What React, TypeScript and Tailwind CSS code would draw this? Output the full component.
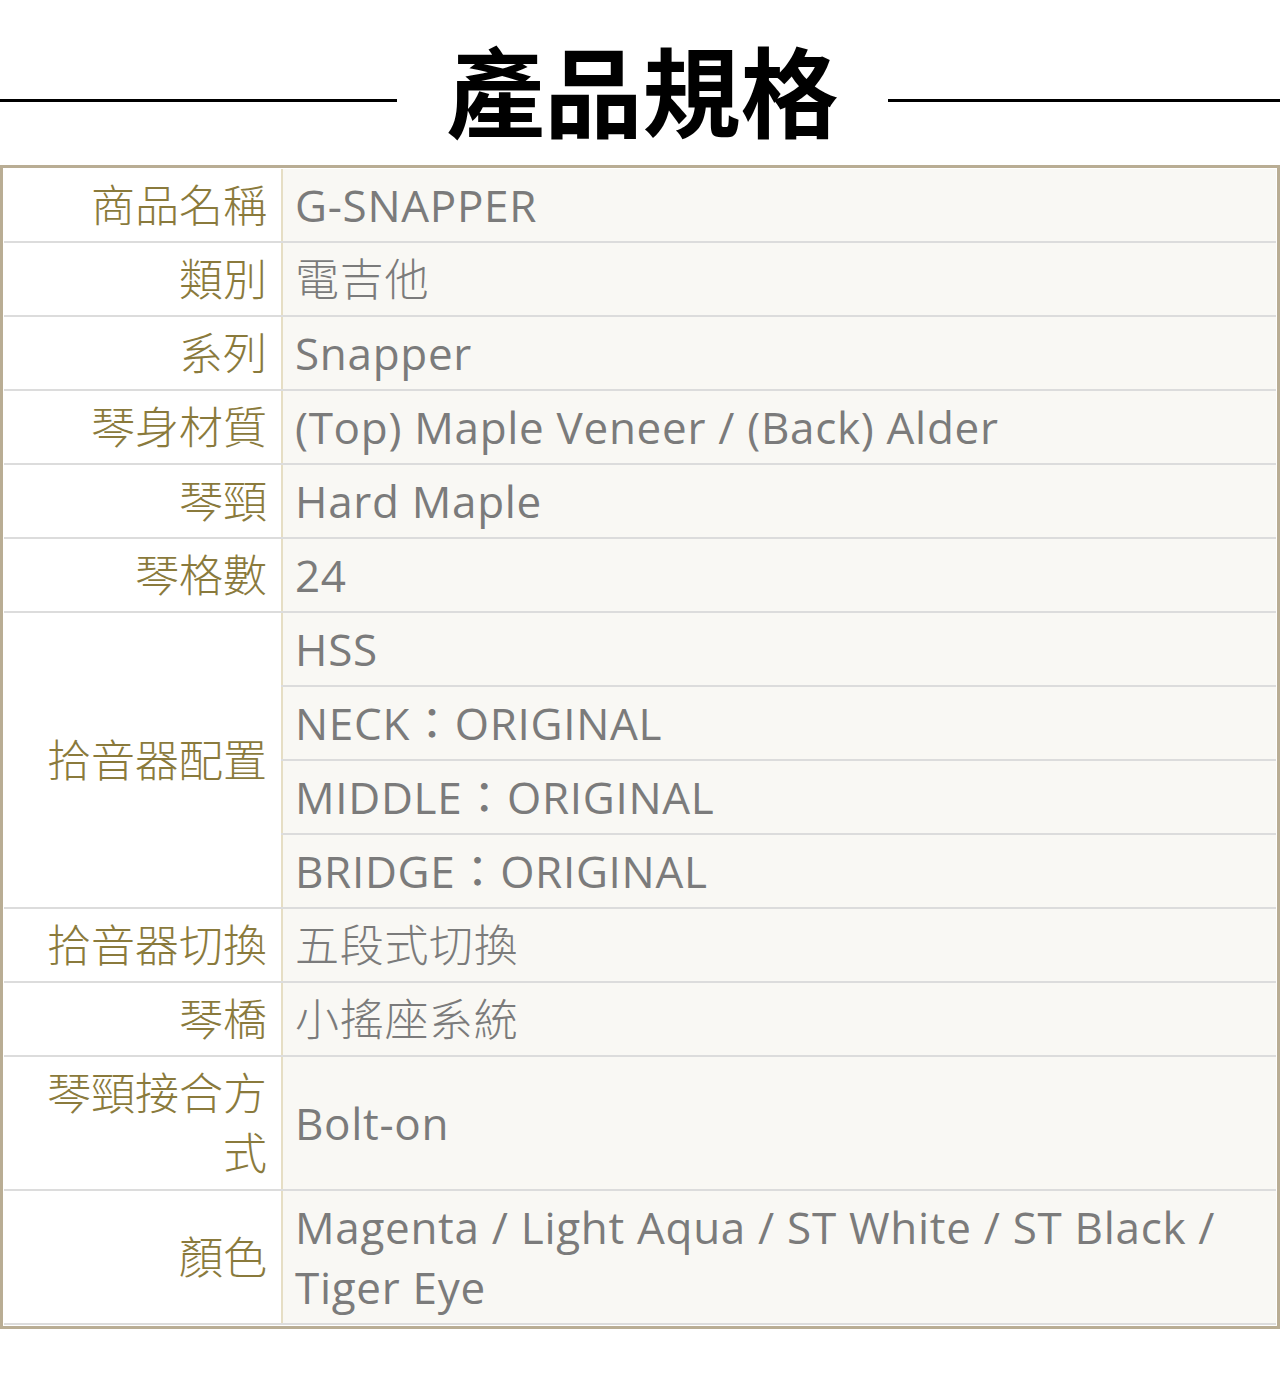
const rows: { label: string; values: string[] }[] = [
  { label: "商品名稱", values: ["G-SNAPPER"] },
  { label: "類別", values: ["電吉他"] },
  { label: "系列", values: ["Snapper"] },
  { label: "琴身材質", values: ["(Top) Maple Veneer / (Back) Alder"] },
  { label: "琴頸", values: ["Hard Maple"] },
  { label: "琴格數", values: ["24"] },
  { label: "拾音器配置", values: ["HSS", "NECK：ORIGINAL", "MIDDLE：ORIGINAL", "BRIDGE：ORIGINAL"] },
  { label: "拾音器切換", values: ["五段式切換"] },
  { label: "琴橋", values: ["小搖座系統"] },
  { label: "琴頸接合方式", values: ["Bolt-on"] },
  { label: "顏色", values: ["Magenta / Light Aqua / ST White / ST Black / Tiger Eye"] },
];

const font = { fontFamily: '"Open Sans", "Noto Sans CJK TC", sans-serif' };

// values written only in Chinese get the lighter weight, like the labels
const isCjk = (s: string) => /^[\u4e00-\u9fff]+$/.test(s);

export default function App() {
  return (
    <div className="w-[1280px] bg-white" style={font}>
      <div className="flex h-[165px] items-start">
        <div className="mt-[99px] h-[3px] w-[397px] bg-black" />
        <h1
          className="mt-[38px] w-[491px] text-center text-[98px] font-bold leading-none text-black"
          style={{ fontFamily: '"Noto Sans CJK TC", sans-serif' }}
        >
          產品規格
        </h1>
        <div className="mt-[99px] h-[3px] flex-1 bg-black" />
      </div>

      <div className="border-[3px] border-[#b9ad94] bg-white p-px">
        <table className="w-full border-collapse">
          <tbody>
            {rows.map((row) =>
              row.values.map((v, i) => (
                <tr key={row.label + i}>
                  {i === 0 && (
                    <td
                      rowSpan={row.values.length}
                      className="w-[278px] border-b-2 border-[#dcdcdc] bg-white py-[6px] pl-10 pr-[14px] text-right align-middle text-[44px] font-light leading-[60px] text-[#8a7a3c]"
                    >
                      {row.label}
                    </td>
                  )}
                  <td
                    className={
                      "border-b-2 border-l-2 border-b-[#dcdcdc] border-l-[#e6dec4] bg-[#f9f8f4] py-[6px] pl-3 pr-6 align-middle text-[44px] leading-[60px] tracking-[0.7px] text-[#7b7b7b] " +
                      (isCjk(v) ? "font-light" : "font-normal")
                    }
                  >
                    {v}
                  </td>
                </tr>
              ))
            )}
          </tbody>
        </table>
      </div>
    </div>
  );
}
